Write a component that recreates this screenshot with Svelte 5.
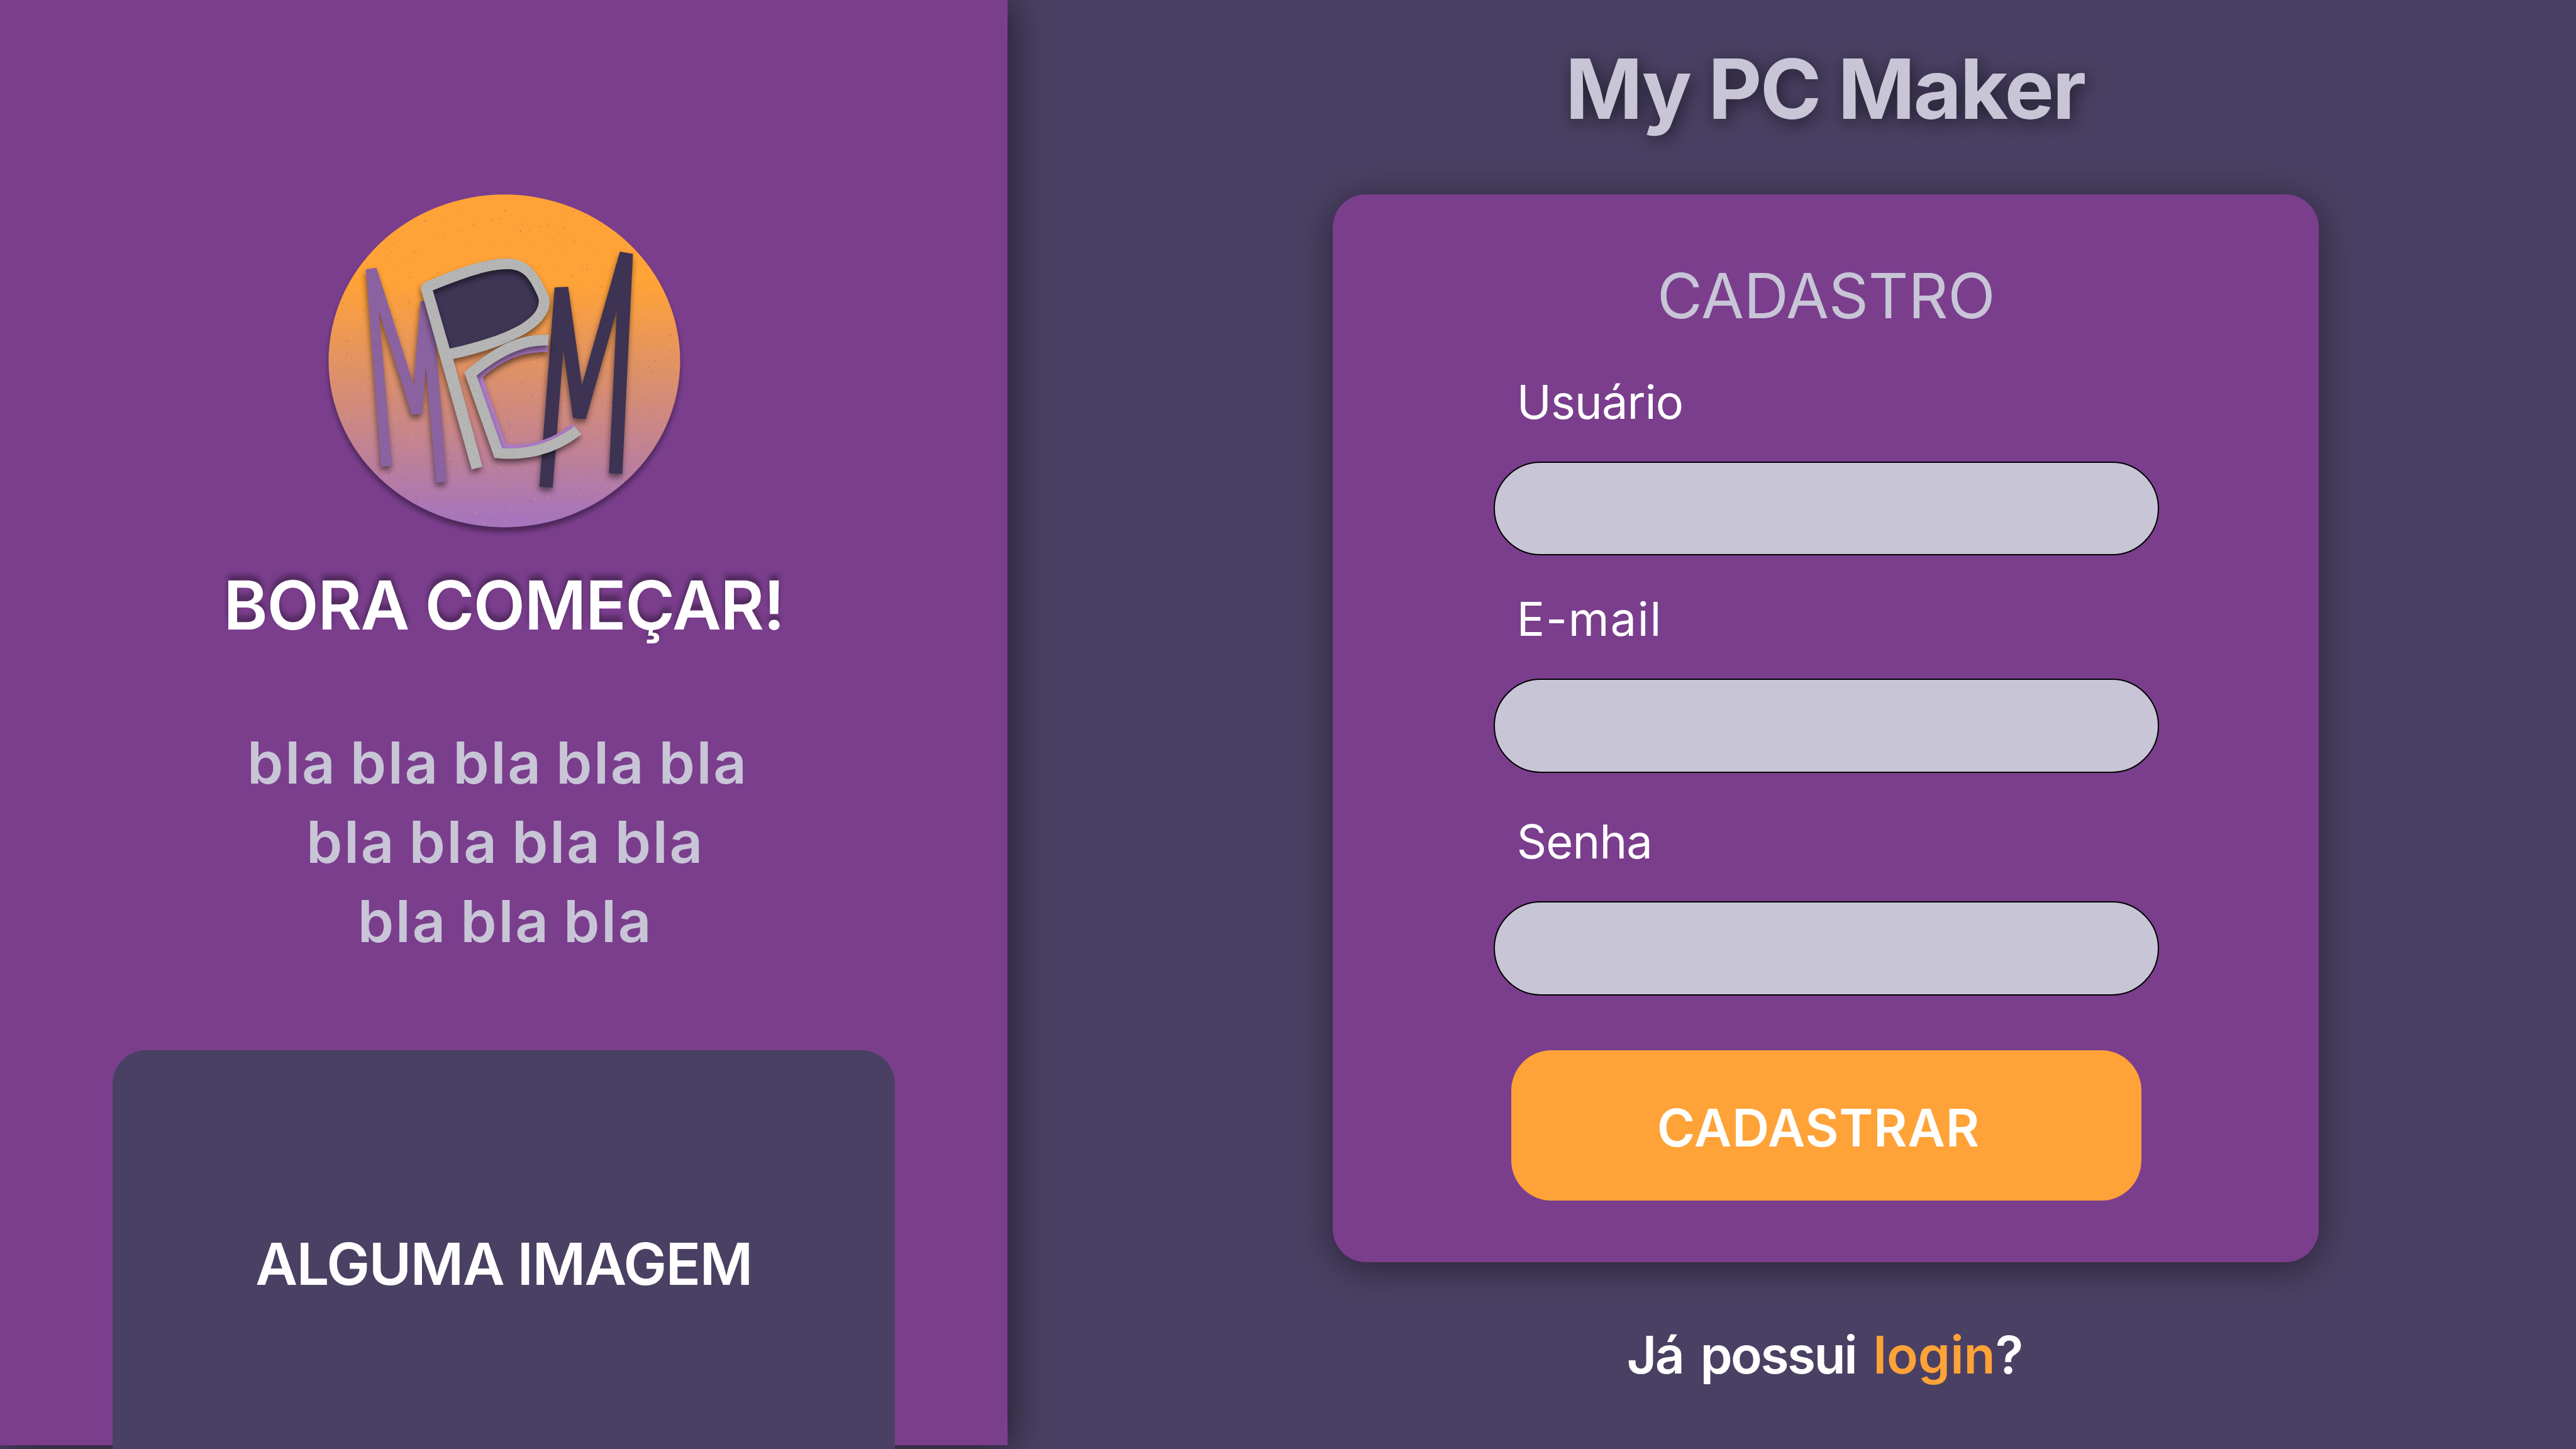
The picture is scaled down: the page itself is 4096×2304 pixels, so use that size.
<script>
  const fields = [
    { id: 'usuario', label: 'Usuário', type: 'text' },
    { id: 'email', label: 'E-mail', type: 'email' },
    { id: 'senha', label: 'Senha', type: 'password' }
  ];

  // Paper-like flecks scattered over the badge, seeded so they stay put.
  let seed = 71;
  const rand = () => (seed = (seed * 16807) % 2147483647) / 2147483647;
  const flecks = Array.from({ length: 900 }, () => {
    const a = rand() * Math.PI * 2;
    const r = Math.sqrt(rand()) * 0.99;
    return {
      x: 783 + Math.cos(a) * r * 727,
      y: 778 + Math.sin(a) * r * 720,
      rx: 0.8 + rand() * rand() * 3.6,
      ry: 0.8 + rand() * 1.8,
      gold: rand() > 0.5
    };
  });
</script>

<div class="page">
  <aside class="side">
    <svg class="logo" viewBox="0 0 1568 1568" preserveAspectRatio="none" role="img" aria-label="MPCM">
      <defs>
        <linearGradient id="sun" x1="0" y1="0" x2="0" y2="1">
          <stop offset="0.27" stop-color="#ffa237" />
          <stop offset="0.98" stop-color="#a674bc" />
        </linearGradient>
        <filter id="discShadow" x="-10%" y="-10%" width="120%" height="120%">
          <feDropShadow dx="0" dy="20" stdDeviation="12" flood-color="#000" flood-opacity="0.4" />
        </filter>
        <filter id="cut" x="-20%" y="-20%" width="140%" height="140%" color-interpolation-filters="sRGB">
          <feTurbulence type="fractalNoise" baseFrequency="0.4" numOctaves="2" seed="3" result="n" />
          <feColorMatrix in="n" type="matrix" values="0 0 0 0 0  0 0 0 0 0  0 0 0 0 0  0.3 0 0 0 -0.12" result="grain" />
          <feComposite in="grain" in2="SourceAlpha" operator="in" result="g" />
          <feGaussianBlur in="SourceAlpha" stdDeviation="13" result="b" />
          <feOffset in="b" dx="-3" dy="15" result="o" />
          <feComponentTransfer in="o" result="s"><feFuncA type="linear" slope="0.5" /></feComponentTransfer>
          <feMerge>
            <feMergeNode in="s" />
            <feMergeNode in="SourceGraphic" />
            <feMergeNode in="g" />
          </feMerge>
        </filter>
      </defs>

      <ellipse cx="783" cy="778" rx="727" ry="720" fill="url(#sun)" filter="url(#discShadow)" />
      {#each flecks as f}
        <ellipse cx={f.x} cy={f.y} rx={f.rx} ry={f.ry} fill={f.gold ? '#ffbb45' : '#76505f'} opacity={f.gold ? 0.75 : 0.55} />
      {/each}

      <path filter="url(#cut)" fill="#9066a6" d="M210 382 254 375 408 884 436 520 486 520 545 1301 501 1305 458 802 443 1007 400 1012 264 565 318 1232 274 1237Z" />
      <path filter="url(#cut)" fill="#403556" d="M991 460 1047 457 1104 882 1261 305 1315 315 1271 1267 1216 1265 1248 562 1120 1030 1067 1026 1027 730 983 1327 928 1322Z" />

      <path fill="#3f3555" d="M470 460C600 400 700 360 790 358C880 360 900 410 920 445C940 480 948 500 947 522C948 620 800 690 560 748Z" />
      <path filter="url(#cut)" fill="#bbbbbb" fill-rule="evenodd" d="M648 1248 439 472Q435 446 458 436C600 373 705 336 790 335C858 336 890 363 921 408C940 438 955 470 965 495C970 510 970 518 970 527C966 635 800 717 571 770L692 1236ZM487 473C600 425 705 383 790 381C845 380 871 402 894 442C905 462 915 483 921 498C925 507 926 515 925 525C921 605 780 674 557 725Z" />

      <path filter="url(#cut)" fill="#b381cd" d="M964 700 963 740C860 737 775 775 694 849L789 1138C895 1150 990 1112 1066 1050L1085 1075C990 1150 870 1185 760 1175L645 835C760 735 860 695 964 700Z" />
      <path filter="url(#cut)" fill="#bbbbbb" d="M967 665C840 659 740 718 617 827L742 1198C880 1216 1010 1175 1102 1095L1073 1060C985 1132 882 1162 774 1156L668 842C770 755 860 709 964 711Z" />
    </svg>

    <h2 class="headline">BORA COMEÇAR!</h2>
    <p class="blurb">
      <span class="first">bla bla bla bla bla</span>
      <span>bla bla bla bla</span>
      <span>bla bla bla</span>
    </p>
    <div class="picture"><span>ALGUMA IMAGEM</span></div>
  </aside>

  <main class="content">
    <h1 class="brand">My PC Maker</h1>
    <form class="card">
      <h2 class="card-title">CADASTRO</h2>
      {#each fields as field}
        <div class="field {field.id}">
          <label for={field.id}>{field.label}</label>
          <input id={field.id} type={field.type} />
        </div>
      {/each}
      <button type="button">CADASTRAR</button>
    </form>
    <p class="signin">Já possui <a href="#login">login</a>?</p>
  </main>
</div>

<style>
  :global(body) {
    margin: 0;
    overflow: hidden;
    background: #4a4063;
  }
  .page {
    display: flex;
    width: 4096px;
    height: 2304px;
    overflow: hidden;
    background: #4a4063;
    font-family: Inter, Roboto, sans-serif;
  }
  h1, h2, p {
    margin: 0;
  }

  .side {
    display: flex;
    flex-direction: column;
    align-items: center;
    flex: none;
    box-sizing: border-box;
    width: 1602px;
    height: 2297.6px;
    padding-top: 288px;
    background: #7a3e8d;
    box-shadow: 8px 4px 53px rgba(0, 0, 0, 0.5);
  }
  .logo {
    flex: none;
    width: 602.7px;
    height: 576px;
    margin-left: 3px;
    overflow: visible;
  }
  .headline {
    flex: none;
    margin-top: 32.6px;
    font-size: 107px;
    line-height: 130px;
    font-weight: 600;
    letter-spacing: -1.45px;
    white-space: nowrap;
    color: #fff;
    text-shadow: 0 -9px 8px rgba(0, 0, 0, 0.35);
  }
  .blurb {
    flex: none;
    display: flex;
    flex-direction: column;
    align-items: center;
    margin-top: 123.2px;
    padding-left: 5px;
    font-size: 92px;
    line-height: 126px;
    font-weight: 600;
    letter-spacing: 2.7px;
    word-spacing: -4.7px;
    white-space: nowrap;
    color: #c8c5d7;
  }
  .blurb .first {
    padding-right: 24px;
  }
  .picture {
    flex: none;
    box-sizing: border-box;
    width: 1243.6px;
    height: 680px;
    margin-top: 142.7px;
    padding-top: 284.6px;
    border-radius: 53.3px;
    background: #4a4063;
    color: #fff;
    text-align: center;
    font-size: 92px;
    line-height: 110px;
    font-weight: 600;
    letter-spacing: -1.66px;
    white-space: nowrap;
  }

  .content {
    flex: 1;
    display: flex;
    flex-direction: column;
    align-items: center;
    padding: 61px 0 0 107.5px;
  }
  .brand {
    padding-right: 2px;
    font-size: 132px;
    line-height: 160px;
    font-weight: 700;
    letter-spacing: -2.7px;
    color: #c8c5d7;
    text-shadow: 4px 6px 28px rgba(0, 0, 0, 0.55);
  }
  .card {
    display: flex;
    flex-direction: column;
    align-items: center;
    flex: none;
    box-sizing: border-box;
    width: 1568px;
    height: 1698.1px;
    margin-top: 88.3px;
    padding: 100.4px 0 0 2px;
    border-radius: 53.3px;
    background: #7a3e8d;
    box-shadow: 0 9px 56px rgba(0, 0, 0, 0.45);
  }
  .card-title {
    margin-bottom: 64.2px;
    font-size: 98.6px;
    line-height: 120px;
    font-weight: 400;
    letter-spacing: -0.3px;
    color: #c8c5d7;
  }
  .field {
    display: flex;
    flex-direction: column;
    gap: 50px;
    width: 1058px;
    margin-bottom: 56px;
  }
  .field.email {
    margin-bottom: 64.8px;
  }
  .field.senha {
    margin-bottom: 87.4px;
  }
  label {
    padding-left: 37px;
    font-size: 74px;
    line-height: 90px;
    letter-spacing: -0.9px;
    color: #fff;
  }
  .email label {
    letter-spacing: 1.8px;
  }
  input {
    box-sizing: border-box;
    width: 100%;
    height: 149.4px;
    margin: 0;
    padding: 0 60px;
    border: 2px solid #000;
    border-radius: 75px;
    background: #c8c5d7;
    font: inherit;
    font-size: 74px;
    outline: none;
  }
  button {
    box-sizing: border-box;
    width: 1002px;
    height: 238.8px;
    margin: 0;
    padding: 8px 25px 0 0;
    border: 0;
    border-radius: 64px;
    background: #ffa237;
    color: #fff;
    font: 600 82px/100px Inter, Roboto, sans-serif;
    letter-spacing: 0.7px;
  }
  .signin {
    margin-top: 97.6px;
    padding-right: 4px;
    font-size: 82px;
    line-height: 100px;
    font-weight: 600;
    letter-spacing: -2.5px;
    word-spacing: 9px;
    white-space: nowrap;
    color: #fff;
  }
  .signin a {
    color: #ffa237;
    letter-spacing: 0;
    text-decoration: none;
  }
</style>
